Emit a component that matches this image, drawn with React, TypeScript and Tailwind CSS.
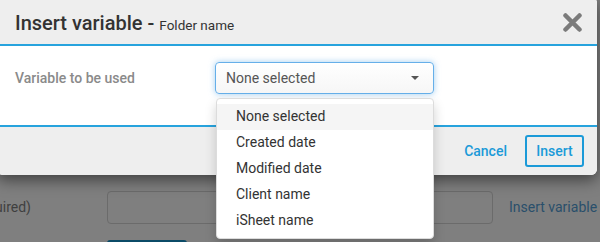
import React from "react";

const options = ["None selected", "Created date", "Modified date", "Client name", "iSheet name"];

export default function App() {
  return (
    <div className="relative w-[600px] h-[242px] overflow-hidden bg-[#7f7f7f] font-['Roboto',sans-serif]">
      {/* page behind the overlay */}
      <div className="flex items-center pt-[191px]">
        <div className="flex justify-end w-[31px] mr-[76px]">
          <span className="whitespace-nowrap text-[14px] text-[#3f3f3f]">(required)</span>
        </div>
        <div className="w-[386px] h-[33px] rounded-[4px] border border-[#6b6b6b]" />
        <div className="ml-[16px] whitespace-nowrap text-[14px] text-[#2a4f6b]">Insert variable</div>
      </div>
      <div className="ml-[107px] mt-[16px] w-[80px] h-[10px] rounded-t-[3px] bg-[#0b4b67]" />

      {/* modal */}
      <div className="absolute left-[-3px] top-[-3px] w-[600px] rounded-[6px] bg-white shadow-[0_5px_15px_rgba(0,0,0,0.5)] overflow-hidden">
        <div className="flex items-center justify-between bg-[#eeeeee] h-[49px] pt-[4px] pl-[18px] pr-[14px] border-b-2 border-[#27a3dd]">
          <div className="flex items-baseline text-[#333]">
            <span className="text-[20px] font-medium">Insert variable -</span>
            <span className="ml-[5px] text-[13.5px]">Folder name</span>
          </div>
          <svg width="21" height="19" viewBox="0 0 21 19">
            <path d="M3.5 2.5 L17.5 16.5 M17.5 2.5 L3.5 16.5" stroke="#7b7b7b" strokeWidth="4.5" strokeLinecap="round" />
          </svg>
        </div>
        <div className="flex items-start h-[81px] pt-[16px] pl-[18px] border-b-2 border-[#27a3dd]">
          <div className="w-[200px] h-[32px] flex items-center text-[14px] font-medium text-[#8a8a8a]">Variable to be used</div>
          <div className="flex items-center justify-between w-[219px] h-[32px] pl-[10px] pr-[14px] rounded-[4px] border border-[#66afe9] shadow-[0_0_6px_rgba(102,175,233,0.6)] bg-gradient-to-b from-white to-[#f6f6f6]">
            <span className="text-[14px] text-[#555]">None selected</span>
            <span className="w-0 h-0 border-l-[4px] border-r-[4px] border-t-[4px] border-l-transparent border-r-transparent border-t-[#555]" />
          </div>
        </div>
        <div className="flex items-center justify-end gap-[18px] h-[48px] bg-[#eeeeee] pr-[13px]">
          <span className="text-[14px] font-medium text-[#1b9ad8]">Cancel</span>
          <div className="flex items-center justify-center w-[59px] h-[32px] rounded-[3px] border-2 border-[#1b9ad8] text-[14px] font-medium text-[#1b9ad8]">
            Insert
          </div>
        </div>
      </div>

      {/* dropdown menu */}
      <div className="absolute left-[216px] top-[98px] w-[218px] py-[5px] rounded-[4px] bg-white border border-[#dcdcdc] shadow-[0_6px_12px_rgba(0,0,0,0.18)]">
        {options.map((o, i) => (
          <div
            key={o}
            className={"h-[25.8px] flex items-center pl-[19px] text-[14px] text-[#333] " + (i === 0 ? "bg-[#f5f5f5]" : "")}
          >
            {o}
          </div>
        ))}
      </div>
    </div>
  );
}
